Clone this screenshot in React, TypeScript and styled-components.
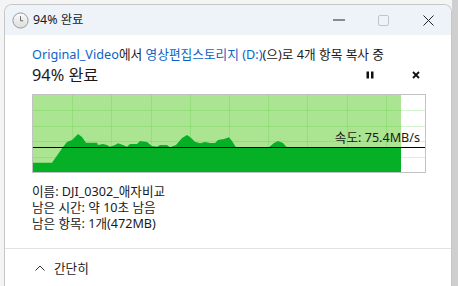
import styled, { createGlobalStyle } from "styled-components";

const GlobalStyle = createGlobalStyle`
    html, body {
        margin: 0;
        padding: 0;
        background: #f4f4f4;
    }
    body {
        font-family: "Segoe UI", "Noto Sans", "Noto Sans CJK KR", sans-serif;
        color: #1a1a1a;
    }
`;

const Page = styled.div`
    width: 458px;
    height: 286px;
    overflow: hidden;
    padding: 4px 0 0 4px;
    box-sizing: border-box;
    background: linear-gradient(to right, #f4f4f4 452px, #cfcfcf 452px);
`;

const Window = styled.div`
    width: 448px;
    height: 282px;
    box-sizing: border-box;
    background: #ffffff;
    border: 1px solid #c6c6c6;
    border-bottom: none;
    border-radius: 8px 8px 0 0;
    overflow: hidden;
    display: flex;
    flex-direction: column;
`;

const TitleBar = styled.header`
    height: 30px;
    flex: none;
    display: flex;
    align-items: center;
    background: #eef3fa;
    padding-left: 7px;
`;

const TitleText = styled.span`
    font-size: 12.4px;
    margin-left: 4px;
    flex: 1;
    line-height: 16px;
`;

const CaptionButton = styled.div`
    width: 45px;
    height: 30px;
    display: flex;
    align-items: center;
    justify-content: center;
`;

const Body = styled.section`
    padding: 10px 0 0 27px;
    display: flex;
    flex-direction: column;
`;

const SourceLine = styled.div`
    font-size: 12.7px;
    line-height: 18px;
    white-space: nowrap;
    color: #1a1a1a;
`;

const Link = styled.span`
    color: #0a64c8;
`;

const StatusRow = styled.div`
    height: 24px;
    display: flex;
    align-items: center;
    padding-right: 12px;
`;

const StatusText = styled.span`
    font-size: 16.3px;
    flex: 1;
    line-height: 24px;
`;

const IconButton = styled.div`
    width: 46px;
    height: 24px;
    display: flex;
    align-items: center;
    justify-content: center;
`;

const ChartBox = styled.div`
    position: relative;
    margin-top: 7px;
    width: 394px;
    height: 79px;
    box-sizing: border-box;
    border: 1px solid #c2c2c2;
    background: #ffffff;
`;

const SpeedLabel = styled.span`
    position: absolute;
    right: 5px;
    top: 35px;
    font-size: 12.6px;
    line-height: 16px;
    color: #1a1a1a;
`;

const Details = styled.div`
    margin-top: 11px;
    display: flex;
    flex-direction: column;
`;

const DetailLine = styled.div`
    font-size: 12.6px;
    line-height: 16px;
    white-space: nowrap;
`;

const Divider = styled.hr`
    margin: 16px 0 0 0;
    border: none;
    border-top: 1px solid #e2e2e2;
    width: 100%;
`;

const Footer = styled.footer`
    height: 40px;
    display: flex;
    align-items: center;
    gap: 9px;
    padding-left: 30px;
    font-size: 12.6px;
`;

const W = 392;
const H = 77;
const FILL_END = 368;
const LINE_Y = 52;

const graph: [number, number][] = [
    [0, 67.7], [19, 67.7], [23, 62], [30, 52], [34, 47], [39, 45], [45, 39], [49, 42],
    [53, 47.7], [64, 47.7], [65, 50], [70, 49], [74, 50], [77, 51.7], [82, 50], [85, 48.3],
    [90, 50], [94, 51.7], [97, 49], [104, 49], [107, 46], [114, 47], [119, 51], [124, 51.7],
    [127, 50], [134, 50], [137, 52.3], [143, 50], [149, 43], [154, 40], [157, 42], [162, 46.7],
    [167, 48.3], [172, 47], [177, 48], [182, 48], [185, 45], [191, 44], [196, 42.3], [199, 46],
    [203, 52.3], [236, 52.3], [241, 48], [245, 46], [250, 48], [254, 52.5], [368, 53],
];

function ClockIcon() {
    return (
        <svg width="17" height="17" viewBox="0 0 17 17">
            <defs>
                <linearGradient id="cg" x1="0" y1="0" x2="0" y2="1">
                    <stop offset="0" stopColor="#fbfbfb" />
                    <stop offset="1" stopColor="#dcdcdc" />
                </linearGradient>
            </defs>
            <circle cx="8.5" cy="8.5" r="7.6" fill="url(#cg)" stroke="#9a9a9a" strokeWidth="1" />
            <path d="M8.5 4.2 V8.8 H11.2" fill="none" stroke="#6a6a6a" strokeWidth="1" />
        </svg>
    );
}

function SpeedChart() {
    const cols = Array.from({ length: 9 }, (_, i) => (W / 10) * (i + 1));
    const rows = Array.from({ length: 4 }, (_, i) => (H / 5) * (i + 1));
    const pts = [...graph, [FILL_END, H], [0, H]].map((p) => p.join(",")).join(" ");
    return (
        <svg width={W} height={H} viewBox={`0 0 ${W} ${H}`} style={{ display: "block" }}>
            <rect x="0" y="0" width={FILL_END} height={H} fill="#ace592" />
            {cols.map((x) => (
                <line key={x} x1={Math.round(x) + 0.5} x2={Math.round(x) + 0.5} y1="0" y2={H} stroke="rgba(70,200,50,0.22)" />
            ))}
            {rows.map((y) => (
                <line key={y} x1="0" x2={W} y1={Math.round(y) + 0.5} y2={Math.round(y) + 0.5} stroke="rgba(70,200,50,0.22)" />
            ))}
            <polygon points={pts} fill="#06b026" />
            <line x1="0" x2={W} y1={LINE_Y + 0.5} y2={LINE_Y + 0.5} stroke="#000" strokeWidth="1" />
        </svg>
    );
}

export default function App() {
    return (
        <>
            <GlobalStyle />
            <Page>
                <Window>
                    <TitleBar>
                        <ClockIcon />
                        <TitleText>94% 완료</TitleText>
                        <CaptionButton>
                            <svg width="12" height="2" viewBox="0 0 12 2">
                                <rect x="0" y="0.5" width="12" height="1" fill="#222" />
                            </svg>
                        </CaptionButton>
                        <CaptionButton>
                            <svg width="11" height="11" viewBox="0 0 11 11">
                                <rect x="0.5" y="0.5" width="10" height="10" rx="1.5" fill="none" stroke="#c4c4c4" />
                            </svg>
                        </CaptionButton>
                        <CaptionButton>
                            <svg width="11" height="11" viewBox="0 0 11 11">
                                <path d="M0.5 0.5 L10.5 10.5 M10.5 0.5 L0.5 10.5" stroke="#222" strokeWidth="1" />
                            </svg>
                        </CaptionButton>
                    </TitleBar>
                    <Body>
                        <SourceLine>
                            <Link>Original_Video</Link>에서 <Link>영상편집스토리지 (D:)</Link>(으)로 4개 항목 복사 중
                        </SourceLine>
                        <StatusRow>
                            <StatusText>94% 완료</StatusText>
                            <IconButton>
                                <svg width="8" height="8" viewBox="0 0 8 8">
                                    <rect x="0.5" y="0.5" width="2.5" height="7" fill="#111" />
                                    <rect x="5" y="0.5" width="2.5" height="7" fill="#111" />
                                </svg>
                            </IconButton>
                            <IconButton>
                                <svg width="8" height="8" viewBox="0 0 8 8">
                                    <path d="M1 1 L7 7 M7 1 L1 7" stroke="#111" strokeWidth="1.8" />
                                </svg>
                            </IconButton>
                        </StatusRow>
                        <ChartBox>
                            <SpeedChart />
                            <SpeedLabel>속도: 75.4MB/s</SpeedLabel>
                        </ChartBox>
                        <Details>
                            <DetailLine>이름: DJI_0302_애자비교</DetailLine>
                            <DetailLine>남은 시간: 약 10초 남음</DetailLine>
                            <DetailLine>남은 항목: 1개(472MB)</DetailLine>
                        </Details>
                    </Body>
                    <Divider />
                    <Footer>
                        <svg width="10" height="6" viewBox="0 0 10 6">
                            <path d="M0.5 5.5 L5 1 L9.5 5.5" fill="none" stroke="#333" strokeWidth="1" />
                        </svg>
                        <span>간단히</span>
                    </Footer>
                </Window>
            </Page>
        </>
    );
}
